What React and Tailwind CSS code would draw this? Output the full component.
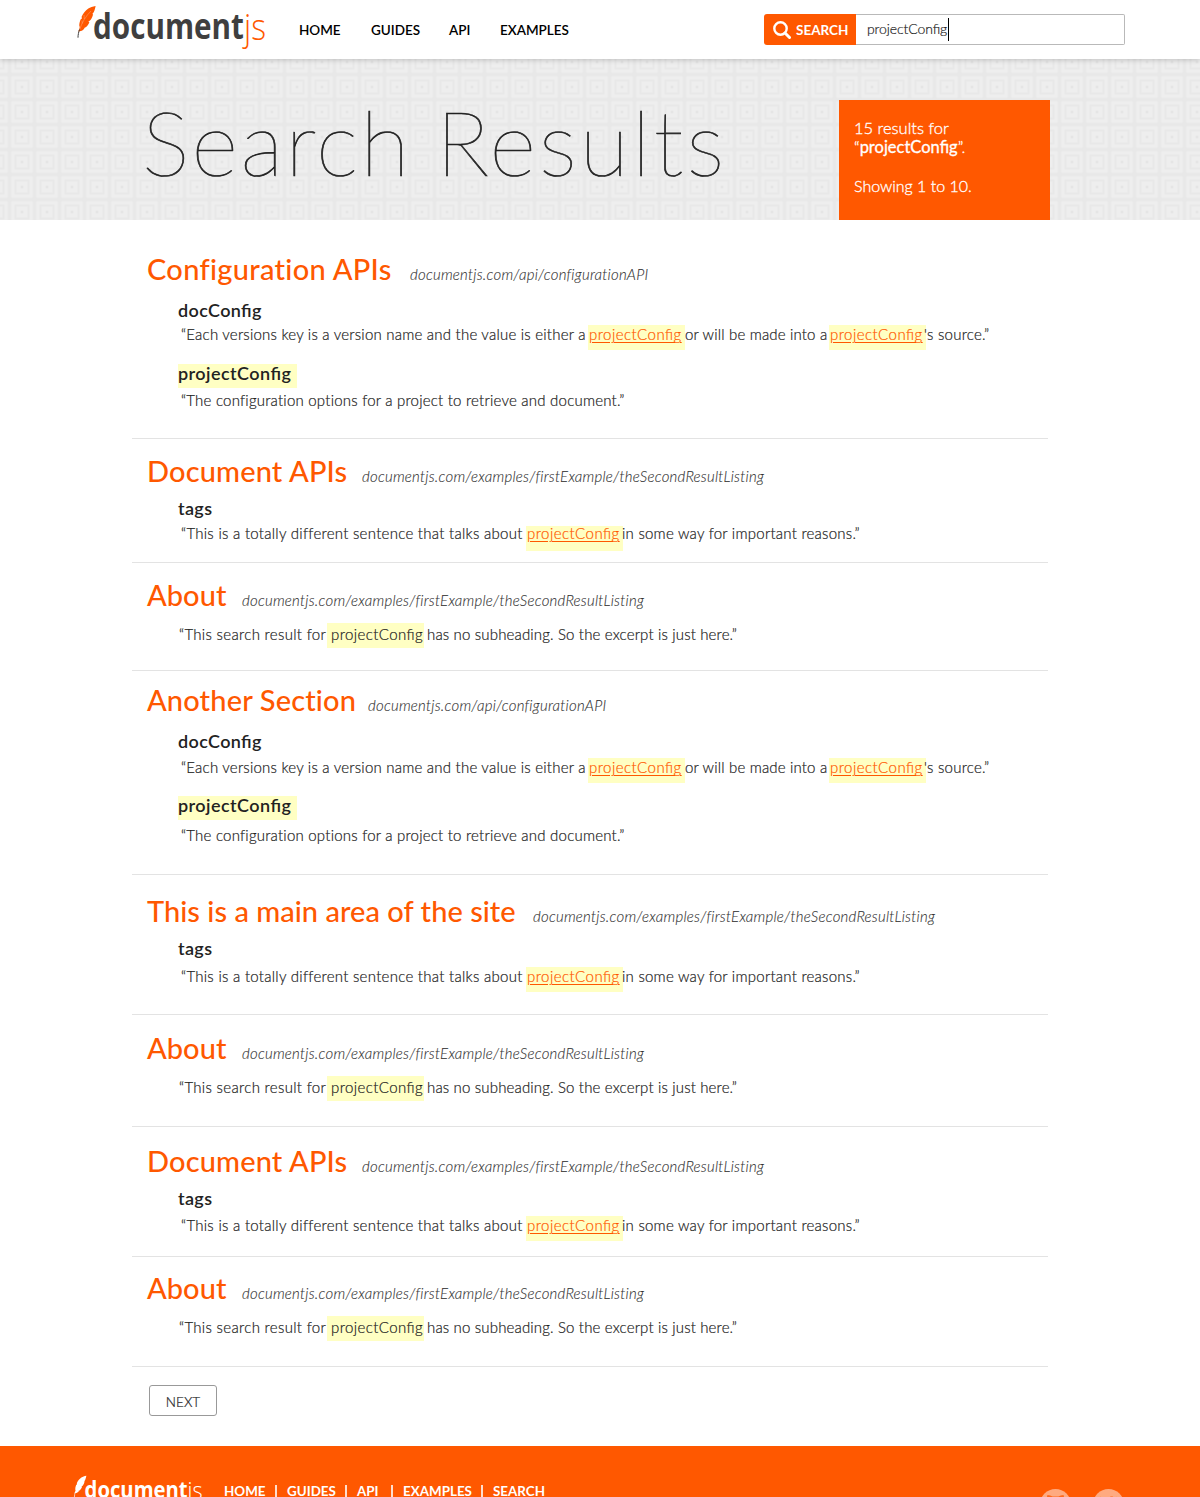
import React from "react";

const RESULTS = [
  {
    title: "Configuration APIs",
    url: "documentjs.com/api/configurationAPI",
    box: "h-[219px] pt-[31px]",
    titleBox: "w-[263px] tracking-[0.3px]",
    rows: [
      { kind: "sub", text: "docConfig", gap: "mt-[11px]" },
      { kind: "versions", gap: "mt-0" },
      { kind: "subMark", text: "projectConfig", gap: "mt-[14px]" },
      { kind: "options", gap: "mt-[3px]" },
    ],
  },
  {
    title: "Document APIs",
    url: "documentjs.com/examples/firstExample/theSecondResultListing",
    box: "h-[124px] pt-[14px]",
    titleBox: "w-[215px] tracking-[0.15px]",
    rows: [
      { kind: "sub", text: "tags", gap: "mt-[7px]" },
      { kind: "sentence", gap: "mt-px", mark: "mt-[5px] leading-[15px]" },
    ],
  },
  {
    title: "About",
    url: "documentjs.com/examples/firstExample/theSecondResultListing",
    box: "h-[108px] pt-[14px]",
    titleBox: "w-[95px] tracking-[0.05px]",
    rows: [{ kind: "plain", gap: "mt-[9px]" }],
  },
  {
    title: "Another Section",
    url: "documentjs.com/api/configurationAPI",
    box: "h-[204px] pt-[11px]",
    titleBox: "w-[221px] tracking-[0.15px]",
    rows: [
      { kind: "sub", text: "docConfig", gap: "mt-[11px]" },
      { kind: "versions", gap: "mt-[2px]" },
      { kind: "subMark", text: "projectConfig", gap: "mt-[13px]" },
      { kind: "options", gap: "mt-[6px]" },
    ],
  },
  {
    title: "This is a main area of the site",
    url: "documentjs.com/examples/firstExample/theSecondResultListing",
    box: "h-[140px] pt-[18px]",
    titleBox: "w-[386px] tracking-[0.03px]",
    rows: [
      { kind: "sub", text: "tags", gap: "mt-[7px]" },
      { kind: "sentence", gap: "mt-1" },
    ],
  },
  {
    title: "About",
    url: "documentjs.com/examples/firstExample/theSecondResultListing",
    box: "h-[112px] pt-[15px]",
    titleBox: "w-[95px] tracking-[0.05px]",
    rows: [{ kind: "plain", gap: "mt-[9px]" }],
  },
  {
    title: "Document APIs",
    url: "documentjs.com/examples/firstExample/theSecondResultListing",
    box: "h-[130px] pt-[16px]",
    titleBox: "w-[215px] tracking-[0.15px]",
    rows: [
      { kind: "sub", text: "tags", gap: "mt-[7px]" },
      { kind: "sentence", gap: "mt-[3px]" },
    ],
  },
  {
    title: "About",
    url: "documentjs.com/examples/firstExample/theSecondResultListing",
    box: "h-[110px] pt-[13px]",
    titleBox: "w-[95px] tracking-[0.05px]",
    rows: [{ kind: "plain", gap: "mt-[9px]" }],
  },
];

function Logo({ className, word, suffix, feather }) {
  return (
    <svg className={`overflow-visible ${className}`} viewBox="76 5 192 45" aria-label="documentjs">
      <g className={feather}>
        <path d="M95.600 6c-3 .5-5.300 1.300-7.300 2.600-3 2.200-5.300 5-6.700 8.200l.3 1.600-1.300 1.200c-.9 2.200-1.400 4.300-1.300 6.400l.5 1-1.500 4.800 1.300-.6c2-.2 3.500-1 5-2.700l-.8-.2 2.300-1.200c1.600-1.600 2.600-3.300 3.300-5.200l-1.200.2 2.300-2c1.300-1.800 2.200-4 2.600-6.200l-1 .3 1.600-1.900C94.800 10 95.200 8 95.600 6z" />
        <path d="M91 11c-5 5-9 11-11.500 19M84 15l.3 4M82 20.500l.2 3" fill="none" stroke="#fff" strokeOpacity=".4" strokeWidth=".6" />
      </g>
      <path d="M79.500 29.500c-.9 2.800-1.500 5.400-1.500 8.200" className={word} fill="none" stroke="currentColor" strokeWidth="1" />
      <text x="93" y="39" textLength="151" lengthAdjust="spacingAndGlyphs" fill="currentColor" className={`font-['Open_Sans',sans-serif] text-[35px] font-bold ${word}`}>
        document
      </text>
      <text x="244" y="39.500" textLength="22" lengthAdjust="spacingAndGlyphs" fill="currentColor" className={`font-['Open_Sans',sans-serif] text-[36px] font-light ${suffix}`}>
        js
      </text>
    </svg>
  );
}

function Link({ className = "mt-[3px] leading-[19px]" }) {
  return (
    <mark className={`block h-[25px] w-[97px] shrink-0 bg-[#ffffc3] pl-px tracking-[0.46px] text-[#ff5800] [font-feature-settings:'liga'] [-webkit-text-stroke:0.2px_#ff5800] ${className}`}>
      <a className="underline decoration-[0.5px] underline-offset-2">projectConfig</a>
    </mark>
  );
}

function Row({ row }) {
  if (row.kind === "sub") {
    return <h3 className={`h-6 pl-[31px] text-lg leading-6 font-semibold tracking-[0.37px] [font-feature-settings:'liga'] ${row.gap}`}>{row.text}</h3>;
  }
  if (row.kind === "subMark") {
    return (
      <h3 className={`h-6 pl-[31px] text-lg font-semibold tracking-[0.44px] [font-feature-settings:'liga'] ${row.gap}`}>
        <mark className="block h-6 w-[119px] translate-y-[3px] bg-[#ffffc3] leading-[19px] text-inherit">{row.text}</mark>
      </h3>
    );
  }
  const line = `flex h-[25px] items-start text-[15px] leading-[25px] font-light whitespace-nowrap tracking-[0.22px] [-webkit-text-stroke:0.2px_#222] ${row.gap}`;
  if (row.kind === "versions") {
    return (
      <p className={`${line} pl-[34px]`}>
        <span className="w-[407px]">“Each versions key is a version name and the value is either a</span>
        <Link />
        <span className="w-[144px] tracking-[0.17px]">or will be made into a</span>
        <Link />
        <span className="-ml-[2px]">'s source.”</span>
      </p>
    );
  }
  if (row.kind === "options") {
    return <p className={`${line} pl-[34px]`}>“The configuration options for a project to retrieve and document.”</p>;
  }
  if (row.kind === "sentence") {
    return (
      <p className={`${line} pl-[34px]`}>
        <span className="w-[345px] tracking-[0.28px]">“This is a totally different sentence that talks about</span>
        <Link className={row.mark} />
        <span className="-ml-px tracking-[0.24px]">in some way for important reasons.”</span>
      </p>
    );
  }
  return (
    <p className={`${line} pl-[32px]`}>
      <span className="w-[148px] tracking-[0.32px]">“This search result for</span>
      <mark className="mt-px block h-[25px] w-[97px] bg-[#ffffc3] pl-[4px] leading-[23px] tracking-[0.42px] text-inherit [font-feature-settings:'liga']">projectConfig</mark>
      <span className="pl-[3px] tracking-[0.16px]">has no subheading. So the excerpt is just here.”</span>
    </p>
  );
}

function Pattern() {
  return (
    <svg className="absolute inset-0 h-full w-full" aria-hidden="true">
      <defs>
        <pattern id="weave" x="9.500" y="-9.500" width="25" height="25" patternUnits="userSpaceOnUse">
          <rect width="25" height="25" fill="#eeeeee" />
          <rect width="25" height="25" fill="none" stroke="#e8e8e8" strokeWidth="3.600" />
          <rect x="6" y="6" width="13" height="13" fill="none" stroke="#e8e8e8" strokeWidth="2" />
          <rect x="11.500" y="11.500" width="2" height="2" fill="#dedede" />
        </pattern>
      </defs>
      <rect width="100%" height="100%" fill="url(#weave)" />
    </svg>
  );
}

export default function App() {
  return (
    <div className="flex h-[1497px] w-[1200px] flex-col overflow-hidden bg-white font-['Lato',sans-serif] text-[#222]">
      <header className="relative z-10 flex h-[59px] shrink-0 bg-white pl-[76px] shadow-[0_1px_5px_rgba(0,0,0,0.2)]">
        <Logo className="mt-[5px] h-[45px] w-[192px]" word="text-[#3f3f3f]" suffix="text-[#ff5800]" feather="fill-[#ff5800]" />
        <nav className="ml-[31px] flex h-[61px] w-[465px] items-center text-[13.500px] font-semibold text-black">
          <a className="w-[72px]">HOME</a>
          <a className="w-[78px]">GUIDES</a>
          <a className="w-[51px]">API</a>
          <a>EXAMPLES</a>
        </nav>
        <form className="mt-[14px] flex h-[31px]">
          <button type="button" className="flex w-[92px] items-center gap-[5px] rounded-l-[3px] bg-[#ff5800] pt-px pl-[9px] text-[13.500px] font-bold text-white">
            <svg className="-mt-px size-[18px] shrink-0" viewBox="0 0 18 18" fill="none" stroke="currentColor">
              <circle cx="7.500" cy="7.500" r="6.200" strokeWidth="2.400" />
              <path d="M12 12l4.500 4.500" strokeWidth="3" strokeLinecap="round" />
            </svg>
            SEARCH
          </button>
          <div className="flex w-[269px] rounded-r-[2px] border border-l-0 border-[#b9b9b9] pl-[11px] text-[14px] leading-[28px] font-light [-webkit-text-stroke:0.2px_#222]">
            <span className="w-[80px] tracking-[-0.1px] [font-feature-settings:'liga']">projectConfig</span>
            <span className="mt-[3px] ml-px h-[23px] w-px bg-black" />
          </div>
        </form>
      </header>

      <section className="relative flex h-[161px] shrink-0 pl-[142px]">
        <Pattern />
        <h1 className="relative mt-[28px] w-[697px] text-[90px] leading-[108px] font-thin tracking-[2.500px] [word-spacing:-4px] [-webkit-text-stroke:0.7px_#222]">
          Search <span className="tracking-[3.150px]">Results</span>
        </h1>
        <aside className="relative mt-[41px] h-[120px] w-[211px] bg-[#ff5800] pt-[19px] pl-[15px] text-base leading-[19px] font-light text-white [-webkit-text-stroke:0.3px_#fff]">
          <p className="text-[16.500px]">
            15 results for
            <br />“<b>projectConfig</b>”.
          </p>
          <p className="mt-[19px]">Showing 1 to 10.</p>
        </aside>
      </section>

      <main className="shrink-0 pl-[132px]">
        {RESULTS.map((r, i) => (
          <article key={i} className={`w-[916px] border-b border-[#e3e3e3] pl-[15px] ${r.box}`}>
            <div className="flex h-9 items-baseline whitespace-nowrap">
              <h2 className={`text-[29px] leading-9 font-medium text-[#ff5800] ${r.titleBox}`}>{r.title}</h2>
              <cite className="text-[15px] leading-5 font-light tracking-[0.23px] text-[#333] [-webkit-text-stroke:0.1px_#333]">{r.url}</cite>
            </div>
            {r.rows.map((row, j) => (
              <Row key={j} row={row} />
            ))}
          </article>
        ))}
        <button type="button" className="mt-[18px] ml-[17px] flex h-[31px] w-[68px] items-center justify-center rounded-[3px] border border-[#999] pt-[3px] text-[13.500px] font-light [-webkit-text-stroke:0.2px_#222]">
          NEXT
        </button>
      </main>

      <footer className="mt-[30px] flex h-[51px] shrink-0 justify-between overflow-hidden bg-[#ff5800] pr-[76px] pl-[73px] text-white">
        <div className="flex">
          <Logo className="mt-[29px] h-[31px] w-[131px]" word="text-white" suffix="text-white" feather="fill-white" />
          <nav className="ml-[20px] flex h-5 pt-[35px] text-[13.400px] leading-5 font-bold">
            <a className="w-[51px]">HOME</a>
            <i className="mt-1 mr-[10px] h-3 w-[2px] shrink-0 bg-white/80" />
            <a className="w-[58px]">GUIDES</a>
            <i className="mt-1 mr-[10px] h-3 w-[2px] shrink-0 bg-white/80" />
            <a className="w-[34px]">API</a>
            <i className="mt-1 mr-[10px] h-3 w-[2px] shrink-0 bg-white/80" />
            <a className="w-[78px]">EXAMPLES</a>
            <i className="mt-1 mr-[10px] h-3 w-[2px] shrink-0 bg-white/80" />
            <a>SEARCH</a>
          </nav>
        </div>
        <div className="flex gap-[22px] pt-[43px]">
          <svg className="size-[31px]" viewBox="0 0 31 31">
            <circle cx="15.500" cy="15.500" r="15.500" fill="#ffaa80" />
            <path d="M7.500 6c2 0 3.500.8 5 1.500h6c1.500-.7 3-1.500 5-1.500.8 2 .6 3.500.2 5 1.300 2 1.300 8-1 10s-12 2-14.400 0-2.300-8-1-10c-.4-1.500-.6-3 .2-5z" fill="#ff6a1c" />
          </svg>
          <svg className="size-[31px]" viewBox="0 0 31 31">
            <circle cx="15.500" cy="15.500" r="15.500" fill="#ffaa80" />
            <path d="M24 10l-2-.2 1.500-2-2.300.8c-3-2.600-6.500 0-5.700 3-3.500 0-6-1.600-8-4-1 2-.6 4 1 5.300l-1.500-.4c0 2 1.300 3.400 3 4l-1.500.1c.5 1.500 2 2.300 3.500 2.500-1.500 1.200-3.500 1.700-5.500 1.500 8 5 16 0 15.700-8.800z" fill="#ff6a1c" />
          </svg>
        </div>
      </footer>
    </div>
  );
}
